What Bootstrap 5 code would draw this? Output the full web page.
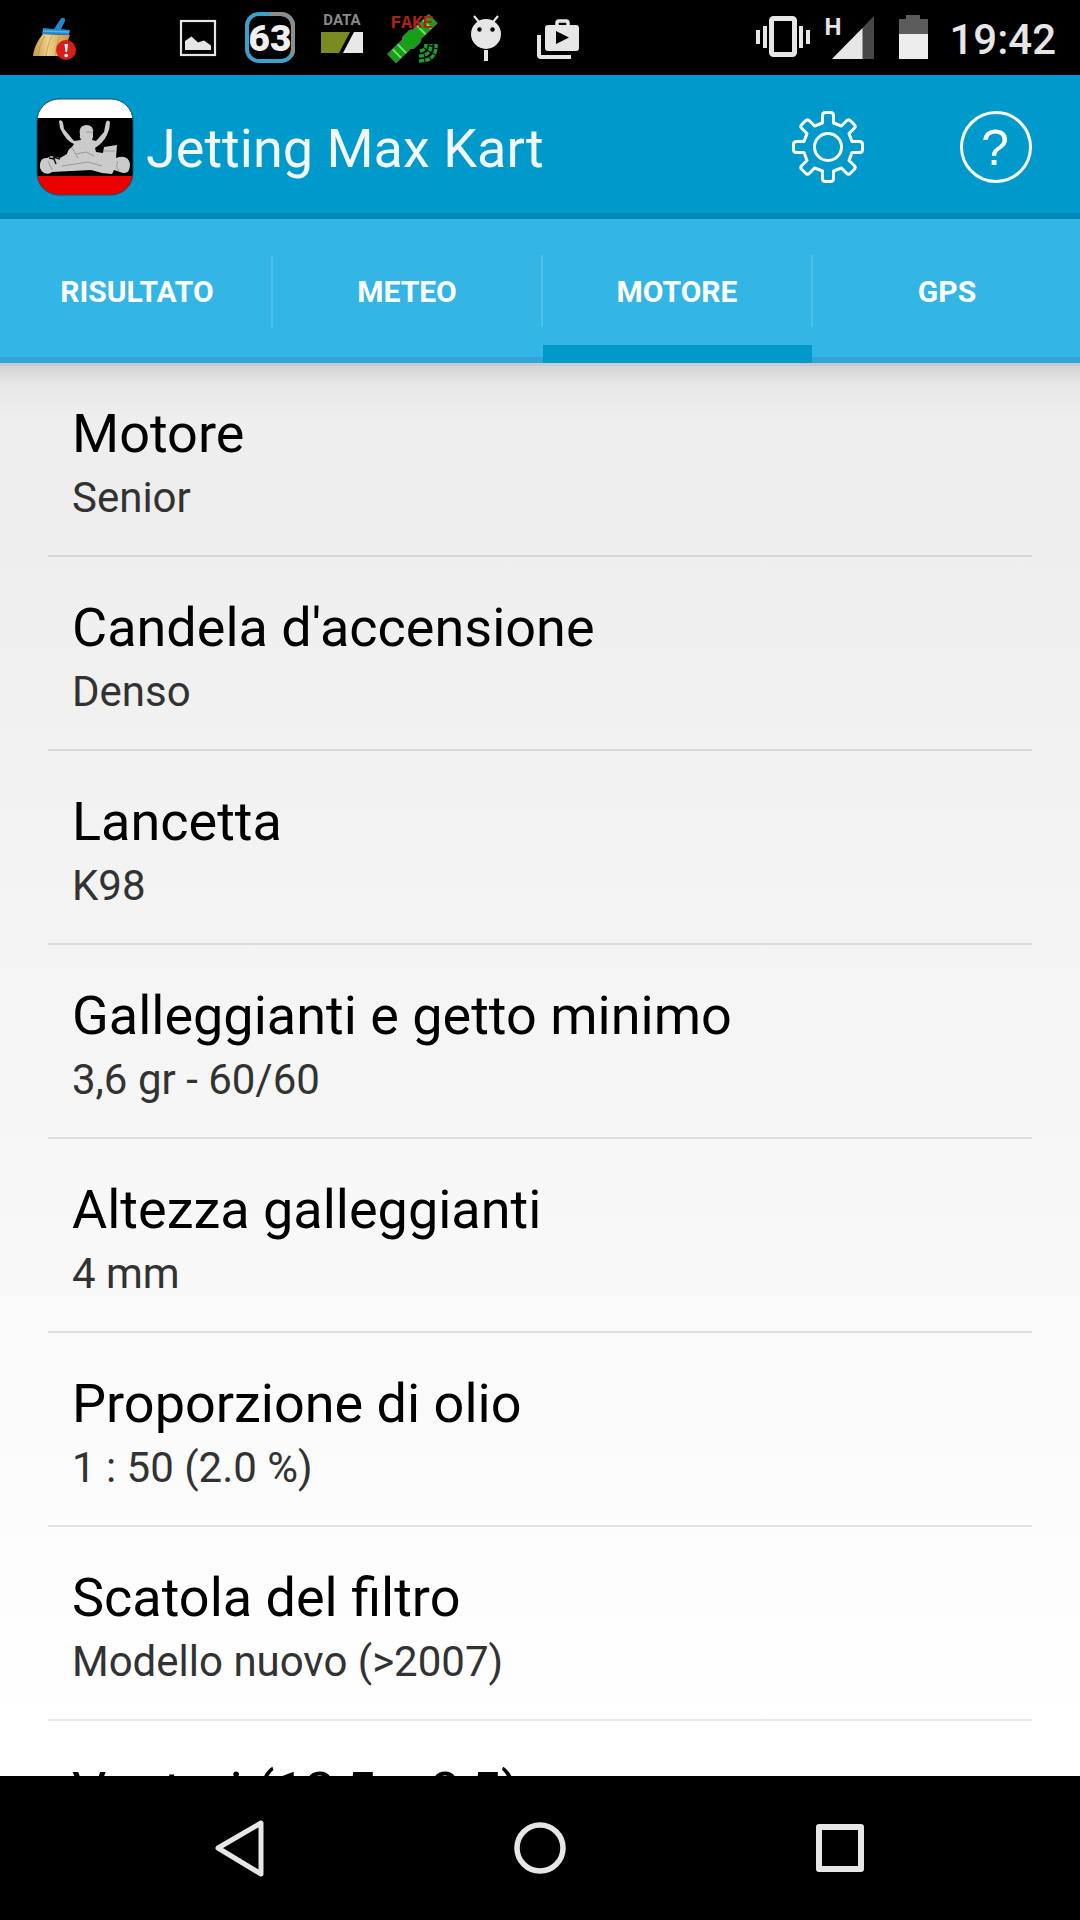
<!DOCTYPE html>
<html lang="it">
<head>
<meta charset="utf-8">
<meta name="viewport" content="width=device-width, initial-scale=1">
<title>Jetting Max Kart</title>
<link href="https://cdn.jsdelivr.net/npm/bootstrap@5.3.0/dist/css/bootstrap.min.css" rel="stylesheet">
<style>
  body { font-family: Roboto, "Noto Sans", sans-serif; background: #000; }
  svg { display: block; flex: none; }
  .status-bar { height: 75px; background: #000; color: #e6e6e6; padding: 0 24px 0 19px; }
  .status-slot { width: 72px; }
  .status-bar .clock { font-size: 42px; line-height: 48px; font-weight: 500; padding-top: 4px; margin-left: 21px; }
  .app-bar { height: 144px; background: #0099cc; box-shadow: inset 0 -6px #0088b8; padding-left: 36px; }
  .app-title { font-size: 54px; line-height: 64px; color: #f2f8fb; font-weight: 400; padding-top: 4px; }
  .bar-action { width: 168px; height: 144px; border: 0; border-radius: 0; }
  .tab-strip { height: 144px; background: #33b5e5; padding-left: 2px; box-shadow: inset 0 -6px #2fa6d6; }
  .tab-row { margin-right: -2px; }
  .tab-row .nav-link { position: relative; height: 144px; padding: 2px 0 0; border-radius: 0; color: #fff; font-size: 30px; line-height: 36px; font-weight: 700; }
  .tab-row .nav-item + .nav-item .nav-link::before { content: ""; position: absolute; left: -1px; top: 36px; width: 2px; height: 72px; background: #4cc0eb; }
  .tab-row .nav-link.active::after { content: ""; position: absolute; left: 1px; right: 0; bottom: 0; height: 18px; background: #0099cc; }
  .settings-pane { min-height: 0; overflow-y: auto; scrollbar-width: none; padding: 0 48px;
    background: linear-gradient(#c9c9d0 0, #c9c9d0 3px, #d4d4d4 3px, rgba(229,229,229,.9) 20px, rgba(238,238,238,0) 50px), linear-gradient(#eee, #eee 10%, #fff 97%); }
  .settings-pane::-webkit-scrollbar { display: none; }
  .setting { display: block; padding: 39px 24px 25px; border-bottom: 2px solid rgba(0,0,0,.1); color: #000; text-decoration: none; }
  .setting-name { font-size: 54px; line-height: 64px; }
  .setting-value { font-size: 42px; line-height: 64px; color: #323232; }
  .nav-keys { height: 144px; background: #000; }
  .nav-keys .btn { width: 300px; height: 144px; border: 0; border-radius: 0; }
</style>
<script src="https://cdn.jsdelivr.net/npm/bootstrap@5.3.0/dist/js/bootstrap.bundle.min.js"></script>
</head>
<body>
<div class="d-flex flex-column vh-100 overflow-hidden">

  <div class="status-bar d-flex align-items-center flex-shrink-0">
    <!-- cleaner brush -->
    <svg width="72" height="75" viewBox="19 0 72 75" aria-hidden="true">
      <defs><linearGradient id="bristle" x1="0" x2="1"><stop offset="0" stop-color="#c79a4c"/><stop offset=".4" stop-color="#efd08a"/><stop offset="1" stop-color="#c99345"/></linearGradient></defs>
      <path d="M43 34l27 1c-3 6-4 13-4 21H33c1-9 5-16 10-22z" fill="url(#bristle)"/>
      <path d="M45 36c-4 6-6 12-7 20M52 36c-3 6-5 12-6 20M60 36c-3 6-4 12-5 20" stroke="#a97b35" stroke-opacity=".5" fill="none"/>
      <path d="M43 28l11 1 6-9c2-4 6-2 5 1l-4 8 9 1-1 5-27-1z" fill="#2389cf"/>
      <path d="M43 31l26 1" stroke="#55b4ea" stroke-width="1.500"/>
      <circle cx="66" cy="50" r="10" fill="#d81e1a"/>
      <path d="M64.500 44h3.500l-1 8h-1.500z" fill="#fff"/><circle cx="66.200" cy="55.500" r="1.800" fill="#fff"/>
    </svg>
    <div class="status-slot"></div>
    <!-- picture -->
    <svg width="72" height="75" viewBox="163 0 72 75" aria-hidden="true">
      <rect x="181" y="21" width="34" height="34" fill="none" stroke="#e6e6e6" stroke-width="2.200"/>
      <path d="M185 50v-9l6.500-4.500 6.500 6 6-2 7 5v4.500z" fill="#e6e6e6"/>
    </svg>
    <!-- battery percentage -->
    <svg width="72" height="75" viewBox="235 0 72 75" aria-label="63">
      <rect x="247" y="14" width="46" height="47" rx="12" fill="none" stroke="#3ba0cb" stroke-width="4"/>
      <path d="M270 14h11a12 12 0 0 1 12 12v24q0 4-2 6" fill="none" stroke="#8d8d8d" stroke-width="4"/>
      <text x="270" y="51" text-anchor="middle" font-family="Roboto, sans-serif" font-weight="900" font-size="37" fill="#efefef">63</text>
    </svg>
    <!-- data meter -->
    <svg width="72" height="75" viewBox="307 0 72 75" aria-label="DATA">
      <text x="342" y="25" text-anchor="middle" font-family="Roboto, sans-serif" font-weight="700" font-size="15" fill="#8a8a8a">DATA</text>
      <path d="M321 32h29l-11 21h-18z" fill="#7a8c20"/><path d="M354 32h9v21h-20z" fill="#e8e8e8"/>
    </svg>
    <!-- mock location satellite -->
    <svg width="72" height="75" viewBox="379 0 72 75" aria-label="FAKE">
      <g transform="rotate(-44 412 39)" fill="#12a312" stroke="#5f6f5f">
        <rect x="384" y="33" width="21" height="12"/><rect x="418" y="33" width="23" height="12"/>
        <path d="M391 33v12M398 33v12M425 33v12M433 33v12" stroke="#6fe06f" stroke-width="2"/>
        <rect x="404" y="31" width="15" height="16" rx="4"/>
      </g>
      <g fill="none" stroke="#1f9a2b" stroke-width="3.500" stroke-dasharray="5 1"><path d="M420 51q6-1 6-7"/><path d="M419 56q12 0 12-12"/><path d="M419 61q18 0 17-17"/></g>
      <text x="412" y="28" text-anchor="middle" font-family="'Liberation Mono', monospace" font-weight="700" font-size="18" fill="#b0240f">FAKE</text>
    </svg>
    <!-- android head -->
    <svg width="72" height="75" viewBox="451 0 72 75" aria-hidden="true">
      <path d="M474 16l5 6M498 16l-5 6" stroke="#e6e6e6" stroke-width="2.200"/>
      <circle cx="486" cy="34" r="15" fill="#e6e6e6"/><rect x="484" y="50" width="4" height="11" fill="#e6e6e6"/>
      <circle cx="479.500" cy="29.500" r="2.200"/><circle cx="492.500" cy="29.500" r="2.200"/>
    </svg>
    <!-- store -->
    <svg class="me-auto" width="72" height="75" viewBox="523 0 72 75" aria-hidden="true">
      <path d="M539 35v20q0 2 2 2h30" fill="none" stroke="#e6e6e6" stroke-width="4"/>
      <path d="M557 26v-3q0-2 2-2h7q2 0 2 2v3" fill="none" stroke="#e6e6e6" stroke-width="3.500"/>
      <path fill-rule="evenodd" d="M548 25h28q3 0 3 3v20q0 3-3 3h-28q-3 0-3-3V28q0-3 3-3zM556 31v13l13-6.500z" fill="#e6e6e6"/>
    </svg>
    <!-- vibrate, signal, battery -->
    <svg width="54" height="75" viewBox="756 0 54 75" aria-hidden="true">
      <rect x="771.500" y="18.500" width="23" height="36" rx="2" fill="none" stroke="#e6e6e6" stroke-width="5"/>
      <path d="M758 30v14M765 26v22M801 26v22M808 30v14" stroke="#e6e6e6" stroke-width="4"/>
    </svg>
    <svg class="ms-2" width="56" height="75" viewBox="818 0 56 75" aria-label="H">
      <path d="M874 16v43h-42z" fill="#474747"/><path d="M862.500 28v31H832z" fill="#e6e6e6"/>
      <text x="833" y="35" text-anchor="middle" font-family="'Liberation Sans Narrow', Roboto, sans-serif" font-weight="700" font-size="24" fill="#e6e6e6">H</text>
    </svg>
    <svg class="ms-4" width="30" height="75" viewBox="898 0 30 75" aria-hidden="true">
      <path d="M899 19h7v-4h14v4h8v15h-29z" fill="#5c5c5c"/><path d="M899 34h29v25h-29z" fill="#ededed"/>
    </svg>
    <span class="clock">19:42</span>
  </div>

  <header class="app-bar d-flex align-items-center flex-shrink-0">
    <svg width="98" height="98" viewBox="0 0 98 98" aria-hidden="true">
      <defs><clipPath id="badge"><rect x="1" y="1" width="96" height="96" rx="22"/></clipPath></defs>
      <g clip-path="url(#badge)"><path fill="#fff" d="M0 0h98v20H0z"/><path fill="#000" d="M0 20h98v58H0z"/><path fill="#eb0000" d="M0 78h98v20H0z"/></g>
      <rect x="1" y="1" width="96" height="96" rx="22" fill="none" stroke="#1a4f66" stroke-width="1"/>
      <path fill="#cbcbcb" d="M23 23Q26 21 27 25L28 31L38 43L45 42Q43 39 44 37Q42 28 50 27Q58 27 57 35V39L56 42L60 43L68 34L70 24Q72 21 74 24Q74 31 71 37Q67 45 59 50L60 54L67 55L68 49L81 47L80 60Q92 56 94 66Q94 76 87 75L78 72L76 76L66 75L55 72L16 74Q13 77 8 75Q3 72 4 66Q5 59 11 60L15 58L24 60L31 56Q32 51 36 49L38 46Q30 43 24 30Z"/>
      <path d="M26 68L52 64L66 68M40 56L50 54L58 58M12 63L16 72M68 53H79M50 34H57M82 63Q79 68 83 73M36 50L42 60" stroke="#989898" fill="none"/>
      <path d="M13 60L18 61L20 66M17 59L24 61" stroke="#111" stroke-width="1.500" fill="none"/>
    </svg>
    <h1 class="app-title mb-0 ms-2 ps-1 me-auto">Jetting Max Kart</h1>
    <button type="button" class="bar-action btn p-0 d-flex align-items-center justify-content-center" aria-label="Impostazioni">
      <svg width="76" height="76" viewBox="-38 -38 76 76" fill="none" stroke="#fff" stroke-width="3" stroke-linejoin="round" aria-hidden="true">
        <circle r="13.500"/>
        <path d="M-5.500-24V-31.500Q-5.500-34.500-2.500-34.500H2.500Q5.500-34.500 5.500-31.500V-24L13.500-21L18.500-26.200Q20.500-28.200 22.500-26.200L26.200-22.500Q28.200-20.500 26.200-18.500L21-13.500L24-5.500H31.500Q34.500-5.500 34.500-2.500V2.500Q34.500 5.500 31.500 5.500H24L21 13.500L26.200 18.500Q28.200 20.500 26.200 22.500L22.500 26.200Q20.500 28.200 18.500 26.200L13.500 21L5.500 24V31.500Q5.500 34.500 2.500 34.500H-2.500Q-5.500 34.500-5.500 31.500V24L-13.500 21L-18.500 26.200Q-20.500 28.200-22.500 26.200L-26.200 22.500Q-28.200 20.500-26.200 18.500L-21 13.500L-24 5.500H-31.500Q-34.500 5.500-34.500 2.500V-2.500Q-34.500-5.500-31.500-5.500H-24L-21-13.500L-26.200-18.500Q-28.200-20.500-26.200-22.500L-22.500-26.200Q-20.500-28.200-18.500-26.200L-13.500-21Z"/>
      </svg>
    </button>
    <button type="button" class="bar-action btn p-0 d-flex align-items-center justify-content-center" aria-label="Aiuto">
      <svg width="76" height="76" viewBox="-38 -38 76 76" aria-hidden="true">
        <circle r="34.500" fill="none" stroke="#fff" stroke-width="3"/>
        <text x="-1" y="18" text-anchor="middle" font-family="'Liberation Sans', sans-serif" font-size="50" fill="#fff">?</text>
      </svg>
    </button>
  </header>

  <nav class="tab-strip flex-shrink-0 overflow-hidden">
    <ul class="tab-row nav nav-justified flex-nowrap">
      <li class="nav-item"><a class="nav-link d-flex align-items-center justify-content-center" href="#">RISULTATO</a></li>
      <li class="nav-item"><a class="nav-link d-flex align-items-center justify-content-center" href="#">METEO</a></li>
      <li class="nav-item"><a class="nav-link active d-flex align-items-center justify-content-center" aria-current="page" href="#">MOTORE</a></li>
      <li class="nav-item"><a class="nav-link d-flex align-items-center justify-content-center" href="#">GPS</a></li>
    </ul>
  </nav>

  <main class="settings-pane flex-grow-1">
    <a class="setting" href="#"><div class="setting-name">Motore</div><div class="setting-value">Senior</div></a>
    <a class="setting" href="#"><div class="setting-name">Candela d'accensione</div><div class="setting-value">Denso</div></a>
    <a class="setting" href="#"><div class="setting-name">Lancetta</div><div class="setting-value">K98</div></a>
    <a class="setting" href="#"><div class="setting-name">Galleggianti e getto minimo</div><div class="setting-value">3,6 gr - 60/60</div></a>
    <a class="setting" href="#"><div class="setting-name">Altezza galleggianti</div><div class="setting-value">4 mm</div></a>
    <a class="setting" href="#"><div class="setting-name">Proporzione di olio</div><div class="setting-value">1 : 50 (2.0 %)</div></a>
    <a class="setting" href="#"><div class="setting-name">Scatola del filtro</div><div class="setting-value">Modello nuovo (&gt;2007)</div></a>
    <a class="setting" href="#"><div class="setting-name">Venturi (12,5 x 8,5)</div></a>
  </main>

  <div class="nav-keys d-flex justify-content-center flex-shrink-0">
    <button type="button" class="btn p-0 d-flex align-items-center justify-content-center" aria-label="Indietro">
      <svg width="60" height="60" viewBox="0 0 60 60" fill="none" stroke="#e6e6e6" stroke-width="5" stroke-linejoin="round" aria-hidden="true"><path d="M51 5v51L8 30z"/></svg>
    </button>
    <button type="button" class="btn p-0 d-flex align-items-center justify-content-center" aria-label="Home">
      <svg width="60" height="60" viewBox="0 0 60 60" fill="none" stroke="#e6e6e6" stroke-width="5.500" aria-hidden="true"><circle cx="30" cy="30" r="23"/></svg>
    </button>
    <button type="button" class="btn p-0 d-flex align-items-center justify-content-center" aria-label="Recenti">
      <svg width="60" height="60" viewBox="0 0 60 60" fill="none" stroke="#e6e6e6" stroke-width="6" stroke-linejoin="round" aria-hidden="true"><rect x="9" y="9" width="42" height="42"/></svg>
    </button>
  </div>
</div>
</body>
</html>
